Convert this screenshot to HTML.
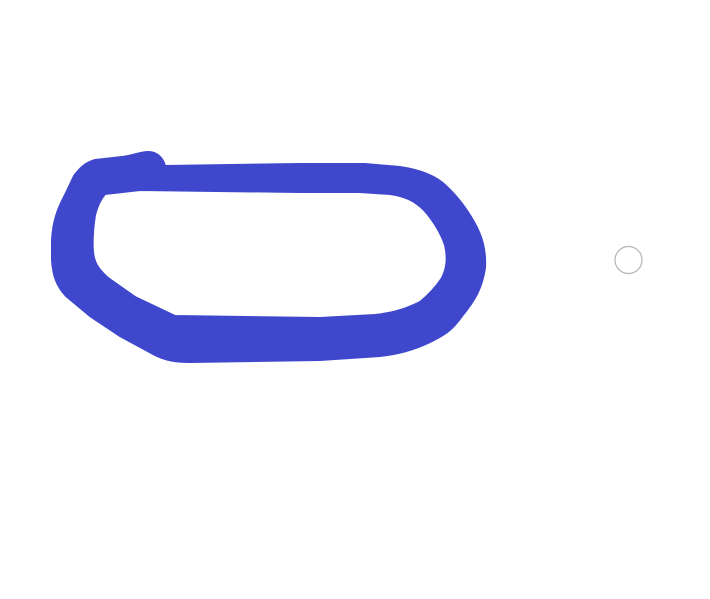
<!DOCTYPE html>
<html><head><meta charset="utf-8"><style>html,body{margin:0;padding:0;background:#fff;width:710px;height:599px;overflow:hidden}</style></head>
<body>
<svg width="710" height="599" viewBox="0 0 710 599" xmlns="http://www.w3.org/2000/svg">
<path fill-rule="evenodd" fill="#3f48cc" stroke="#3f48cc" stroke-width="2" stroke-linejoin="round"
d="M148,152 C140,152 132,156 122,157 L95,160 C85,163 80,168 74,176 L65,195 C57,210 53,222 52,240 L52,260 C53,275 56,285 66,296 L90,316 L120,336 L155,355 C165,360 175,362 190,362 L320,360 L380,356 C400,354 415,349 428,343 C445,335 452,330 462,316 C475,300 482,288 485,268 C486,250 482,236 474,222 C466,208 458,197 446,186 C436,176 420,170 400,167 L365,164 L300,164 L165,166 C163,158 157,152 148,152 Z
M140,190 L105,194 C100,200 97,207 95,215 C93,228 92,240 93,252 C94,262 97,268 108,278 L135,297 L175,316 L320,318 L375,315 C395,313 408,308 420,302 C430,294 436,287 442,278 C447,268 448,258 445,245 C441,233 433,220 424,210 C415,201 405,196 390,194 L360,192 L300,192 Z"/>
<circle cx="628.5" cy="260" r="13.5" fill="none" stroke="#b4b4b4" stroke-width="1.2"/>
</svg>
</body></html>
